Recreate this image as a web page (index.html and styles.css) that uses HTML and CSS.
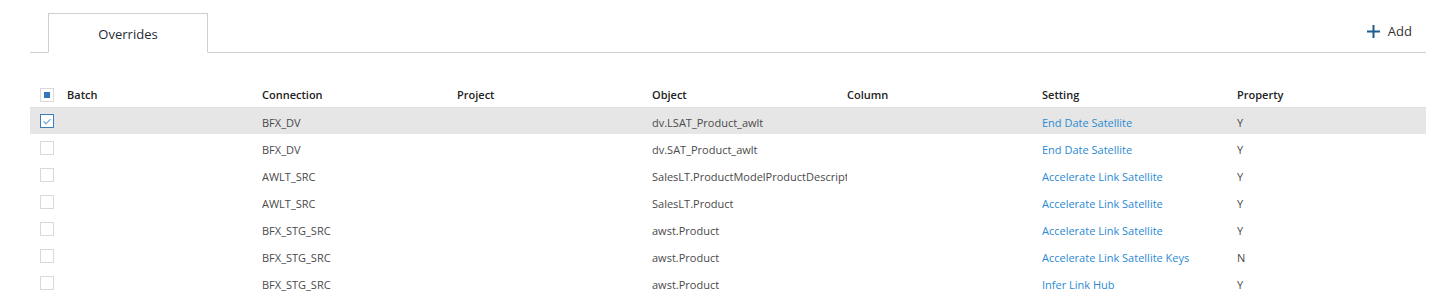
FILE: index.html
```html
<!DOCTYPE html>
<html lang="en">
<head>
  <meta charset="UTF-8">
  <title>Overrides</title>
  <link rel="stylesheet" href="styles.css">
</head>
<body>
  <div class="page">
    <div class="tabs">
      <div class="tab active">Overrides</div>
      <button class="add-btn">
        <svg width="13" height="13" viewBox="0 0 13 13"><path d="M6.5 0v13M0 6.5h13" stroke="#1d5d8f" stroke-width="2"/></svg>
        <span>Add</span>
      </button>
    </div>

    <table class="grid">
      <colgroup>
        <col class="col-check">
        <col class="col-data"><col class="col-data"><col class="col-data">
        <col class="col-data"><col class="col-data"><col class="col-data">
        <col>
      </colgroup>
      <thead>
        <tr>
          <th><span class="check partial"></span></th>
          <th>Batch</th>
          <th>Connection</th>
          <th>Project</th>
          <th>Object</th>
          <th>Column</th>
          <th>Setting</th>
          <th>Property</th>
        </tr>
      </thead>
      <tbody>
        <tr class="selected">
          <td><span class="check checked"></span></td>
          <td></td><td>BFX_DV</td><td></td><td>dv.LSAT_Product_awlt</td><td></td>
          <td><a href="#">End Date Satellite</a></td><td>Y</td>
        </tr>
        <tr>
          <td><span class="check"></span></td>
          <td></td><td>BFX_DV</td><td></td><td>dv.SAT_Product_awlt</td><td></td>
          <td><a href="#">End Date Satellite</a></td><td>Y</td>
        </tr>
        <tr>
          <td><span class="check"></span></td>
          <td></td><td>AWLT_SRC</td><td></td><td>SalesLT.ProductModelProductDescription</td><td></td>
          <td><a href="#">Accelerate Link Satellite</a></td><td>Y</td>
        </tr>
        <tr>
          <td><span class="check"></span></td>
          <td></td><td>AWLT_SRC</td><td></td><td>SalesLT.Product</td><td></td>
          <td><a href="#">Accelerate Link Satellite</a></td><td>Y</td>
        </tr>
        <tr>
          <td><span class="check"></span></td>
          <td></td><td>BFX_STG_SRC</td><td></td><td>awst.Product</td><td></td>
          <td><a href="#">Accelerate Link Satellite</a></td><td>Y</td>
        </tr>
        <tr>
          <td><span class="check"></span></td>
          <td></td><td>BFX_STG_SRC</td><td></td><td>awst.Product</td><td></td>
          <td><a href="#">Accelerate Link Satellite Keys</a></td><td>N</td>
        </tr>
        <tr>
          <td><span class="check"></span></td>
          <td></td><td>BFX_STG_SRC</td><td></td><td>awst.Product</td><td></td>
          <td><a href="#">Infer Link Hub</a></td><td>Y</td>
        </tr>
      </tbody>
    </table>
  </div>
</body>
</html>
```

FILE: styles.css
```css
* {
  box-sizing: border-box;
}

body {
  margin: 0;
  background: #fff;
  font-family: "Open Sans", "Noto Sans", sans-serif;
  font-size: 11px;
  color: #4a4a4a;
}

.page {
  padding: 0 29px 0 30px;
}

/* Tabs */
.tabs {
  display: flex;
  align-items: flex-end;
  height: 53px;
  border-bottom: 1px solid #cfcfcf;
}

.tab {
  margin-left: 18px;
  margin-bottom: -1px;
  width: 160px;
  height: 40px;
  border: 1px solid #cfcfcf;
  border-bottom-color: #fff;
  background: #fff;
  display: flex;
  align-items: center;
  justify-content: center;
  padding-top: 1px;
  font-size: 13px;
  color: #1f2a36;
}

.add-btn {
  margin-left: auto;
  margin-right: 14px;
  align-self: center;
  margin-top: 10px;
  display: flex;
  align-items: center;
  gap: 8px;
  border: 0;
  background: none;
  padding: 0;
  font-family: inherit;
  font-size: 13px;
  color: #333;
  cursor: pointer;
}

/* Grid */
.grid {
  width: 100%;
  margin-top: 30px;
  border-collapse: collapse;
  table-layout: fixed;
}

.col-check { width: 37px; }
.col-data { width: 195px; }

.grid th {
  height: 24px;
  text-align: left;
  font-weight: 600;
  color: #222;
  padding: 0;
  border-bottom: 1px solid #e2e2e2;
  white-space: nowrap;
}

.grid td {
  height: 27px;
  padding: 3px 10px 0 0;
  white-space: nowrap;
  overflow: hidden;
}

.grid th:first-child,
.grid td:first-child {
  padding: 0 0 0 10px;
}

.grid tr.selected td {
  background: #e6e6e6;
}

.grid a {
  color: #2b8ad3;
  text-decoration: none;
}

/* Checkboxes */
.check {
  display: block;
  position: relative;
  width: 14px;
  height: 14px;
  border: 1px solid #d9d9d9;
  background: #fff;
}

.check.partial::after {
  content: '';
  position: absolute;
  left: 3px;
  top: 3px;
  width: 6px;
  height: 6px;
  background: #3277b9;
}

.check.checked {
  border-color: #3c7dbc;
}

.check.checked::after {
  content: '';
  position: absolute;
  left: 4px;
  top: 2px;
  width: 3px;
  height: 6px;
  border: solid #6a9ccf;
  border-width: 0 1px 1px 0;
  transform: rotate(45deg);
}
```
